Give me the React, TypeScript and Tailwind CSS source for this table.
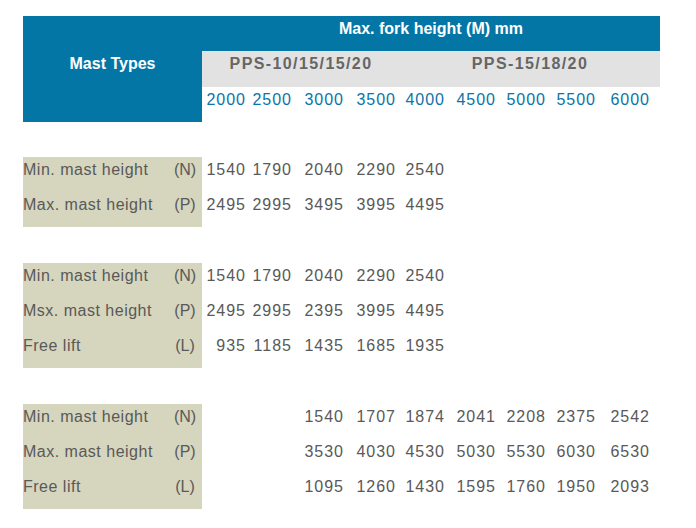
import React from "react";

type Row = {
  label: string;
  unit: string;
  values: (number | null)[];
};

const forkHeights = [2000, 2500, 3000, 3500, 4000, 4500, 5000, 5500, 6000];

const sections: Row[][] = [
  [
    { label: "Min. mast height", unit: "(N)", values: [1540, 1790, 2040, 2290, 2540, null, null, null, null] },
    { label: "Max. mast height", unit: "(P)", values: [2495, 2995, 3495, 3995, 4495, null, null, null, null] },
  ],
  [
    { label: "Min. mast height", unit: "(N)", values: [1540, 1790, 2040, 2290, 2540, null, null, null, null] },
    { label: "Msx. mast height", unit: "(P)", values: [2495, 2995, 2395, 3995, 4495, null, null, null, null] },
    { label: "Free lift", unit: "(L)", values: [935, 1185, 1435, 1685, 1935, null, null, null, null] },
  ],
  [
    { label: "Min. mast height", unit: "(N)", values: [null, null, 1540, 1707, 1874, 2041, 2208, 2375, 2542] },
    { label: "Max. mast height", unit: "(P)", values: [null, null, 3530, 4030, 4530, 5030, 5530, 6030, 6530] },
    { label: "Free lift", unit: "(L)", values: [null, null, 1095, 1260, 1430, 1595, 1760, 1950, 2093] },
  ],
];

const cols = "grid grid-cols-[48px_46px_52px_52px_49px_51px_50px_50px_60px]";

const NumberCells = ({ values, color }: { values: (number | null)[]; color: string }) => (
  <div className={`${cols} w-[458px]`}>
    {values.map((v, i) => (
      <div
        key={i}
        className={`text-right pt-[1px] leading-6 tracking-[1px] ${color} ${i === 8 ? "pr-[10px]" : "pr-1"}`}
      >
        {v ?? ""}
      </div>
    ))}
  </div>
);

const App = () => {
  return (
    <div
      className="w-[696px] h-[528px] bg-white pl-[23px] pt-4 text-[16px]"
      style={{ fontFamily: '"Liberation Sans", Arial, sans-serif' }}
    >
      <div className="flex w-[637px]">
        <div className="w-[179px] h-[106px] bg-[#0376a6] flex items-center justify-center pb-[10px] text-white font-bold">
          Mast Types
        </div>
        <div className="w-[458px] flex flex-col">
          <div className="h-[35px] bg-[#0376a6] text-white font-bold text-center pt-[1px] leading-6">
            Max. fork height (M) mm
          </div>
          <div className="h-[36px] bg-[#e2e2e2] grid grid-cols-[198px_260px] text-[#666666] font-bold tracking-[1.4px] text-center pt-[1px] leading-6">
            <div>PPS-10/15/15/20</div>
            <div>PPS-15/18/20</div>
          </div>
          <div className="h-[35px]">
            <NumberCells values={forkHeights} color="text-[#0b74a8]" />
          </div>
        </div>
      </div>

      {sections.map((rows, s) => (
        <div key={s} className={s === 0 ? "mt-[35px]" : "mt-[36px]"}>
          {rows.map((row, r) => (
            <div key={r} className="flex h-[35px] text-[#595959]">
              <div className="w-[147px] bg-[#d6d5bd] pt-[1px] leading-6 tracking-[0.5px]">{row.label}</div>
              <div className="w-[32px] bg-[#d6d5bd] pt-[1px] leading-6 text-center pr-[2px]">{row.unit}</div>
              <NumberCells values={row.values} color="text-[#595959]" />
            </div>
          ))}
        </div>
      ))}
    </div>
  );
};

export default App;
